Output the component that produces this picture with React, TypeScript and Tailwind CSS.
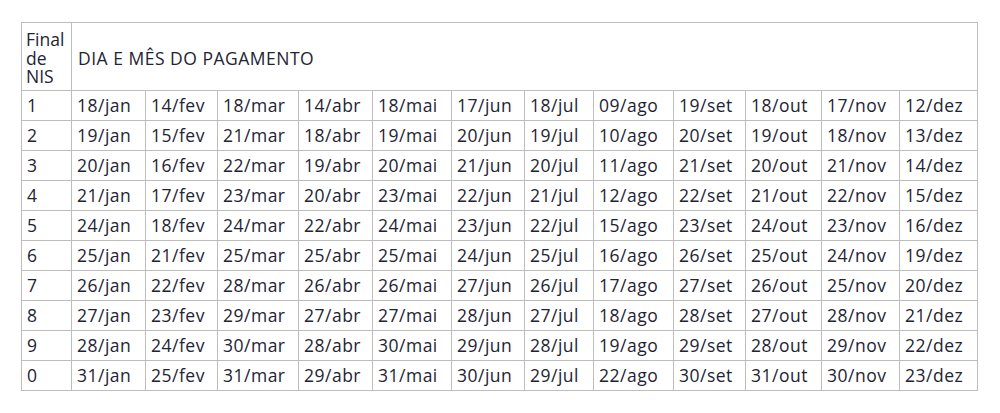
const months = ["jan", "fev", "mar", "abr", "mai", "jun", "jul", "ago", "set", "out", "nov", "dez"];

const rows: { nis: string; days: string[] }[] = [
  { nis: "1", days: ["18", "14", "18", "14", "18", "17", "18", "09", "19", "18", "17", "12"] },
  { nis: "2", days: ["19", "15", "21", "18", "19", "20", "19", "10", "20", "19", "18", "13"] },
  { nis: "3", days: ["20", "16", "22", "19", "20", "21", "20", "11", "21", "20", "21", "14"] },
  { nis: "4", days: ["21", "17", "23", "20", "23", "22", "21", "12", "22", "21", "22", "15"] },
  { nis: "5", days: ["24", "18", "24", "22", "24", "23", "22", "15", "23", "24", "23", "16"] },
  { nis: "6", days: ["25", "21", "25", "25", "25", "24", "25", "16", "26", "25", "24", "19"] },
  { nis: "7", days: ["26", "22", "28", "26", "26", "27", "26", "17", "27", "26", "25", "20"] },
  { nis: "8", days: ["27", "23", "29", "27", "27", "28", "27", "18", "28", "27", "28", "21"] },
  { nis: "9", days: ["28", "24", "30", "28", "30", "29", "28", "19", "29", "28", "29", "22"] },
  { nis: "0", days: ["31", "25", "31", "29", "31", "30", "29", "22", "30", "31", "30", "23"] },
];

const widths = [50, 74, 72, 81, 74, 79, 73, 69, 80, 72, 76, 78, 78];

export default function App() {
  return (
    <div className="w-[1000px] h-[413px] bg-white pt-[22px] pl-[21px]" style={{ fontFamily: "'Open Sans', 'Noto Sans', sans-serif" }}>
      <table className="border-collapse table-fixed w-[957px] border border-[#a0a0a0] text-[17.5px] tracking-[0.5px] text-[#1e2434]">
        <colgroup>
          {widths.map((w, i) => (
            <col key={i} style={{ width: w }} />
          ))}
        </colgroup>
        <thead>
          <tr className="h-[68px]">
            <th className="border border-[#bdbdbd] pl-[4px] pr-0 pt-[3px] text-left font-normal leading-[18.5px] tracking-normal align-middle">
              Final
              <br />
              de
              <br />
              NIS
            </th>
            <th colSpan={12} className="border border-[#bdbdbd] px-[6px] pt-[3px] text-left font-normal align-middle">
              DIA E MÊS DO PAGAMENTO
            </th>
          </tr>
        </thead>
        <tbody>
          {rows.map((r) => (
            <tr key={r.nis} className="h-[30px]">
              <td className="border border-[#bdbdbd] px-[5px] leading-none">{r.nis}</td>
              {r.days.map((d, i) => (
                <td key={i} className="border border-[#bdbdbd] pl-[5px] pr-0 leading-none whitespace-nowrap overflow-hidden">
                  {d}/{months[i]}
                </td>
              ))}
            </tr>
          ))}
        </tbody>
      </table>
    </div>
  );
}
